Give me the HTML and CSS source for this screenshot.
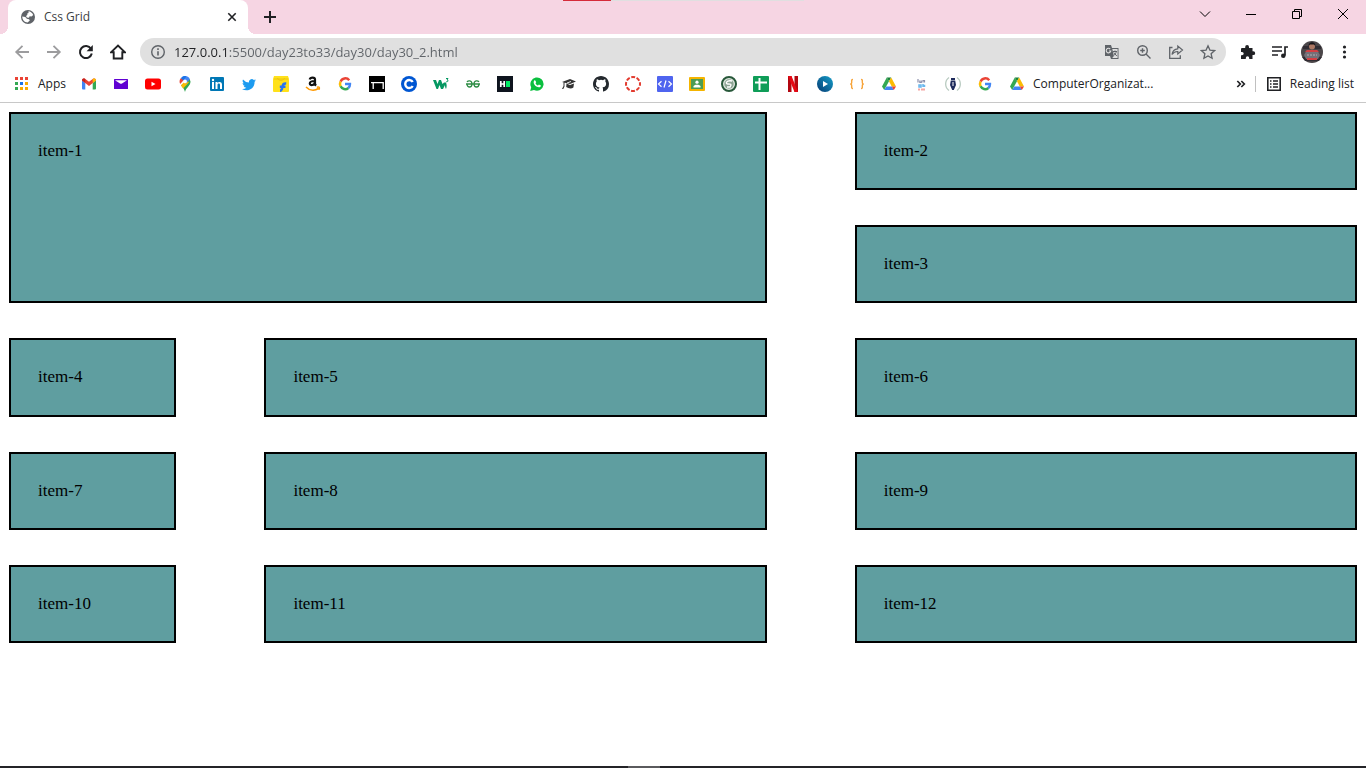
FILE: index.html
```
<!DOCTYPE html>
<html lang="en">
<head>
<meta charset="utf-8">
<meta name="viewport" content="width=device-width, initial-scale=1">
<title>Css Grid</title>
<link rel="stylesheet" href="styles.css">
</head>
<body>
<svg class="defs" aria-hidden="true">
  <symbol id="google" viewBox="0 0 16 16">
    <path fill="none" stroke="#ea4335" stroke-width="2.5" d="M12.200 4.200A5 5 0 0 0 3.600 5.700"/>
    <path fill="none" stroke="#fbbc05" stroke-width="2.5" d="M3.600 5.600a5 5 0 0 0 0 4.800"/>
    <path fill="none" stroke="#34a853" stroke-width="2.5" d="M3.600 10.300a5 5 0 0 0 7.800 1.700"/>
    <path fill="none" stroke="#4285f4" stroke-width="2.4" d="M8 8h5a5 5 0 0 1-1.700 4"/>
  </symbol>
  <symbol id="drive" viewBox="0 0 16 16">
    <path fill="#34a853" d="M5.800 1.500 8 5.200 3.200 14 1 10.400z"/>
    <path fill="#188038" d="M5.800 1.500h4.400L8 5.200z"/>
    <path fill="#fbbc04" d="M10.200 1.500 15 10.400h-4.300L8 5.200z"/>
    <path fill="#4285f4" d="M5.300 10.400h5.400l2.100 3.600H3.200z"/>
    <path fill="#ea4335" d="M10.700 10.400H15L12.800 14z"/>
  </symbol>
</svg>

<div class="load-track"><div class="load-value"></div></div>

<header class="browser">
  <div class="tab-strip">
    <div class="tab">
      <svg class="icon16" viewBox="0 0 16 16"><circle cx="8" cy="8" r="7" fill="#5f6368"/><path fill="#fff" d="M8.500 2.300c2 .2 4 1.600 4.700 3.700L11.500 7.500 9.600 7.200 9 8.700 6.800 8.500 6 7 7.500 5.800 7 4.700l1.500-.8zM2.300 7.500l3 .4 1.600 1.800 2.200.5.700 1.400-2.200 1.900C4.600 13.300 2.100 10.800 2.300 7.500z"/></svg>
      <span class="tab-title">Css Grid</span>
      <button class="tab-close" aria-label="Close tab"><svg class="icon16" viewBox="0 0 16 16"><path class="line dark" stroke-width="1.6" d="m4.300 4.300 7.400 7.400m0-7.400-7.400 7.400"/></svg></button>
    </div>
    <button class="new-tab" aria-label="New tab"><svg class="icon16" viewBox="0 0 16 16"><path class="line dark" stroke-width="2" d="M8 2v12M2 8h12"/></svg></button>
    <div class="window-controls">
      <button aria-label="Search tabs"><svg class="icon16" viewBox="0 0 16 16"><path class="line black" d="m3 5.500 5 5 5-5"/></svg></button>
      <button aria-label="Minimize"><svg class="icon16" viewBox="0 0 16 16"><path class="line black" d="M3 8.500h10"/></svg></button>
      <button aria-label="Restore"><svg class="icon16" viewBox="0 0 16 16"><path class="line black" d="M3.500 5.500h7v7h-7zM5.500 5.500v-2h7v7h-2"/></svg></button>
      <button aria-label="Close"><svg class="icon16" viewBox="0 0 16 16"><path class="line black" d="m3 3 10 10m0-10L3 13"/></svg></button>
    </div>
  </div>

  <div class="toolbar">
    <button class="tool" aria-label="Back"><svg class="icon16" viewBox="0 0 16 16"><path class="line pale" stroke-width="1.8" d="M15 8H2.500m6-6.200L2.200 8l6.300 6.200"/></svg></button>
    <button class="tool" aria-label="Forward"><svg class="icon16" viewBox="0 0 16 16"><path class="line pale" stroke-width="1.8" d="M1 8h12.500m-6-6.200L13.800 8l-6.300 6.200"/></svg></button>
    <button class="tool" aria-label="Reload"><svg class="icon16" viewBox="0 0 16 16"><path class="line dark" stroke-width="2" d="M13 4.800A6 6 0 1 0 13.800 9.500"/><path fill="#202124" d="M14.800 1v6.200H8.600z"/></svg></button>
    <button class="tool" aria-label="Home"><svg class="icon16" viewBox="0 0 16 16"><path class="line dark" stroke-width="1.9" d="M1 8.300h2.700v6.200h8.600V8.300H15L8 1.500z"/></svg></button>
    <div class="omnibox">
      <svg class="icon16 info" viewBox="0 0 16 16"><circle class="line gray" cx="8" cy="8" r="6.300" stroke-width="1.4"/><path class="line gray" stroke-width="1.6" d="M8 7.200v4.200M8 4.300v1.600"/></svg>
      <input class="url" type="text" aria-label="Address" value="127.0.0.1:5500/day23to33/day30/day30_2.html">
      <button class="tool" aria-label="Translate"><svg class="icon16" viewBox="0 0 16 16"><path fill="#5f6368" d="M1 1h6l1 3h6.500v11H7l-1-3H1z"/><path fill="#e0e0e0" d="M8.300 5h5.300v9H8.200l1.700-2z"/><path class="line gray" d="M9 7.500h4M11 6.500v1M12.300 7.500c-.3 1.900-1.300 3-2.300 3.700M9.800 8.500l3 3.500"/><path fill="none" stroke="#e0e0e0" stroke-width="1.1" d="M6.200 5A2.300 2.300 0 1 0 6.800 7H5"/></svg></button>
      <button class="tool" aria-label="Zoom"><svg class="icon16" viewBox="0 0 16 16"><circle class="line gray" cx="6.500" cy="6.500" r="4.800" stroke-width="1.4"/><path class="line gray" stroke-width="1.4" d="M6.500 4.200v4.600M4.200 6.500h4.600M10 10l4.500 4.500"/></svg></button>
      <button class="tool" aria-label="Share"><svg class="icon16" viewBox="0 0 16 16"><path class="line gray" stroke-width="1.3" d="M4.500 3.500H1.700v10.800h10.600v-3"/><path class="line gray" stroke-width="1.2" d="M4 10.500C4.500 6.500 7 5 9.800 4.800V2L14.500 6l-4.700 4V7.500C7.500 7.400 5.600 8.300 4 10.500z"/></svg></button>
      <button class="tool" aria-label="Bookmark this page"><svg class="icon16" viewBox="0 0 16 16"><path class="line gray" stroke-width="1.3" d="m8 1.800 1.900 4.300 4.700.5-3.500 3.100 1 4.600L8 11.900l-4.100 2.400 1-4.600L1.400 6.600l4.700-.5z"/></svg></button>
    </div>
    <button class="tool" aria-label="Extensions"><svg class="icon16" viewBox="0 0 16 16"><path fill="#202124" d="M2 4h3.200V3a1.900 1.900 0 0 1 3.800 0v1h3.500v3.300h.8a1.900 1.900 0 0 1 0 3.800h-.8V15H9.200v-1a1.700 1.700 0 0 0-3.400 0v1H1v-3.700h1a1.700 1.700 0 0 0 0-3.400H1V5a1 1 0 0 1 1-1z"/></svg></button>
    <button class="tool" aria-label="Media controls"><svg class="icon16" viewBox="0 0 16 16"><path class="line dark" stroke-width="1.7" d="M0 3h10M0 7h10M0 11h6M16 3h-3v8.500"/><circle cx="11.300" cy="11.700" r="2.300" fill="#202124"/></svg></button>
    <button class="tool" aria-label="Profile"><svg class="avatar" viewBox="0 0 22 22"><circle cx="11" cy="11" r="11" fill="#4b4649"/><path fill="#302c33" d="M2 5h18v3H2zM1 16h20l-3 4H4z"/><path fill="#747078" d="M6 9h10l3 5-2 4H5l-2-4z"/><path fill="#d33f43" d="M6 9h10l2 2H4zM6 17h10v2H6z"/><circle cx="11" cy="5.500" r="3" fill="#ad7864"/><path fill="#171519" d="M7.500 5c0-5 7-5 7 0L13 3.500H9z"/><path stroke="#b3afb4" stroke-dasharray="2 1" d="M6 14h10"/></svg></button>
    <button class="tool" aria-label="Menu"><svg class="icon16" viewBox="0 0 16 16"><g fill="#202124"><circle cx="8.500" cy="3" r="1.600"/><circle cx="8.500" cy="8" r="1.600"/><circle cx="8.500" cy="13" r="1.600"/></g></svg></button>
  </div>

  <nav class="bookmarks" aria-label="Bookmarks">
    <a class="apps" href="#"><svg class="icon16" viewBox="0 0 16 16"><path fill="#ea4335" d="M2 1h3v3H2zM7 1h3v3H7zM12 1h3v3h-3z"/><path fill="#34a853" d="M2 6h3v3H2zM2 11h3v3H2z"/><path fill="#1a73e8" d="M7 6h3v3H7z"/><path fill="#f9ab00" d="M12 6h3v3h-3zM7 11h3v3H7zM12 11h3v3h-3z"/></svg><span>Apps</span></a>
    <div class="links">
      <a href="#" aria-label="Gmail"><svg class="icon16" viewBox="0 0 16 16"><path fill="#4285f4" d="M1 4.500 4.300 7v6.500H2a1 1 0 0 1-1-1z"/><path fill="#34a853" d="M15 4.500 11.700 7v6.500H14a1 1 0 0 0 1-1z"/><path fill="#ea4335" d="M1 4.500C1 2.500 3 2 4.300 3L8 5.800 11.700 3C13 2 15 2.500 15 4.500L8 10z"/><path fill="#c5221f" d="M1 4.500C1 2.500 3 2 4.300 3v4z"/><path fill="#fbbc04" d="M15 4.500C15 2.500 13 2 11.700 3v4z"/></svg></a>
      <a href="#" aria-label="Yahoo Mail"><svg class="icon16" viewBox="0 0 16 16"><rect x="1" y="3" width="14" height="10" rx=".5" fill="#6001d2"/><path fill="#fff" d="M2 4.200h12L9 7.500a2 2 0 0 1-2 0z"/></svg></a>
      <a href="#" aria-label="YouTube"><svg class="icon16" viewBox="0 0 16 16"><rect y="2.500" width="16" height="11" rx="2.500" fill="#f00"/><path fill="#fff" d="m6.500 5.700 4 2.300-4 2.300z"/></svg></a>
      <a href="#" aria-label="Maps"><svg class="icon16" viewBox="0 0 16 16"><path fill="#34a853" d="M13.500 5.500C13.500 10 9 11.500 8 16 7.400 13 5.500 11.500 4 9.300l8.500-6.500z"/><path fill="#fbbc04" d="m4 9.500 5.800-6.700 2 3.700-5.700 6z"/><path fill="#ea4335" d="M3.700 2.200A5.500 5.500 0 0 0 3.200 8l4-4.400z"/><path fill="#4285f4" d="M6 .4c3-.9 5.700.4 6.900 2.800L9 7.500 6.300 4.800z"/><path fill="#1a73e8" d="M3.700 2.200A5.500 5.500 0 0 1 8 0l1.500.2-3 4z"/><circle cx="8" cy="5.400" r="1.900" fill="#fff"/></svg></a>
      <a href="#" aria-label="LinkedIn"><svg class="icon16" viewBox="0 0 16 16"><rect x="1" y="1" width="14" height="14" rx="1" fill="#0077b5"/><path fill="#fff" d="M3 6h2v7H3zM6.500 6h2v1C9.500 5.300 13 5.400 13 8.500V13h-2V9c0-2-2.500-1.800-2.500 0v4h-2z"/><circle cx="4" cy="4" r="1.200" fill="#fff"/></svg></a>
      <a href="#" aria-label="Twitter"><svg class="icon16" viewBox="0 0 16 16"><path fill="#1d9bf0" d="M15 4.200c-.5.300-1 .4-1.600.5.600-.4 1-.9 1.200-1.500-.6.300-1.200.5-1.800.7a2.900 2.900 0 0 0-4.900 2.600A8 8 0 0 1 2 3.500c-.8 1.400-.3 3 .9 3.800-.500 0-.9-.1-1.300-.3 0 1.400 1 2.500 2.300 2.800-.4.100-.9.100-1.300 0 .4 1.200 1.500 2 2.700 2A5.700 5.700 0 0 1 1 13c4.800 3 12.700.6 12.600-7.300.6-.4 1-1 1.400-1.500z"/></svg></a>
      <a href="#" aria-label="Flipkart"><svg class="icon16" viewBox="0 0 16 16"><path fill="#ffe11b" d="M1 0h14l1 3v12a1 1 0 0 1-1 1H1a1 1 0 0 1-1-1V3z"/><path fill="none" stroke="#edc40b" d="M4.500 2c.5 3 6.500 3 7 0M1 3h14"/><path fill="none" stroke="#2874f0" stroke-width="2.4" d="M7 14.800c2.500 0 2-2.800 2.700-5 .3-1.500 1-2.600 3.500-2.300M6.800 10.800h5.700"/></svg></a>
      <a href="#" aria-label="Amazon"><svg class="icon16" viewBox="0 0 16 16"><path fill="none" stroke="#111" stroke-width="2.2" d="M4.700 3.500C5.300 1 10 1 10 3.500v4c0 1 .4 1.500 1.200 2M9.800 5C6 5 4.800 5.800 4.800 7.500c0 2.500 4.700 1.800 5-.8"/><path fill="none" stroke="#f90" stroke-width="1.5" d="M1 11c3.500 3.700 8.500 4 12.500 1.500M11.800 11.300c2.500-.6 3.200-.1 2.200 2.400"/></svg></a>
      <a href="#" aria-label="Google"><svg class="icon16"><use href="#google"/></svg></a>
      <a href="#" aria-label="Notes"><svg class="icon16" viewBox="0 0 16 16"><path d="M0 0h16v16H0z"/><path fill="none" stroke="#fff" stroke-width="1.3" d="M2 6.700h12.200V13M4.200 7v6"/></svg></a>
      <a href="#" aria-label="Coursera"><svg class="icon16" viewBox="0 0 16 16"><circle cx="8" cy="8" r="8" fill="#0056d2"/><path fill="none" stroke="#fff" stroke-width="2.4" d="M11.700 6a4 4 0 1 0 0 4"/></svg></a>
      <a href="#" aria-label="W3Schools"><svg class="icon16" viewBox="0 0 16 16"><path fill="#059862" d="M0 4h3l1.500 4L6 4h2l1.500 4L11 6.500h2c.8 2 1 4 0 6.500-.8-1.200-1-2.500-1-4L10 13H8L6.500 9 5 13H3.500z"/><path fill="none" stroke="#059862" d="M13 2.500h2L14 4c1.500 0 1.500 2-.8 1.800"/></svg></a>
      <a href="#" aria-label="GeeksforGeeks"><svg class="icon16" viewBox="0 0 16 16"><path fill="none" stroke="#2f8d46" stroke-width="1.3" d="M1 8h14M2 6c1-1.500 5-2 5 2 0 4-5 4-5 0M14 6c-1-1.500-5-2-5 2 0 4 5 4 5 0"/></svg></a>
      <a href="#" aria-label="HackerRank"><svg class="icon16" viewBox="0 0 16 16"><path fill="#0e141e" d="M0 0h16v16H0z"/><path fill="none" stroke="#fff" stroke-width="1.7" d="M3.800 5v6M7.200 5v6M3.800 8h3.400"/><path fill="#00ea64" d="M9 5h4v6H9z"/></svg></a>
      <a href="#" aria-label="WhatsApp"><svg class="icon16" viewBox="0 0 16 16"><path fill="#0abf3f" d="m1.200 15 1-3.700A6.600 6.600 0 1 1 5 14z"/><path fill="#fff" d="M5.200 4.500c.8-.8 1.300-.2 2 1.700l-.7 1c.6 1.200 1.400 1.800 2.500 2.300l.9-1 2 1c.1 2-2.400 2.300-4.500 1C5.200 9 3.900 6.500 5.200 4.500z"/></svg></a>
      <a href="#" aria-label="Courses"><svg class="icon16" viewBox="0 0 16 16"><path fill="#333" d="m1 6 8-3 6 2.500L9 8zM5.500 7.500 9 9l4-1.500-.6 4c-2 1.500-5 1-7.200-.5zM2.500 6h1v4.500L2.300 13H1l1.500-3z"/><path stroke="#e8e8e8" d="m6 7 4-1.500"/></svg></a>
      <a href="#" aria-label="GitHub"><svg class="icon16" viewBox="0 0 16 16"><path fill="#24292e" d="M8 0C3.580 0 0 3.580 0 8c0 3.540 2.290 6.530 5.470 7.590.4.070.55-.17.55-.38 0-.19-.01-.82-.01-1.490-2.010.37-2.530-.49-2.690-.94-.09-.23-.48-.94-.82-1.130-.28-.15-.68-.52-.01-.53.63-.01 1.080.58 1.230.82.72 1.210 1.870.87 2.330.66.07-.52.28-.87.51-1.070-1.780-.2-3.640-.89-3.640-3.950 0-.87.31-1.590.82-2.150-.08-.2-.36-1.020.08-2.120 0 0 .67-.21 2.200.82a7.600 7.600 0 0 1 4 0c1.530-1.040 2.200-.82 2.200-.82.44 1.100.16 1.920.08 2.120.51.56.82 1.270.82 2.150 0 3.070-1.870 3.750-3.650 3.950.29.25.54.73.54 1.480 0 1.070-.01 1.930-.01 2.200 0 .21.15.46.55.38A8 8 0 0 0 16 8c0-4.420-3.580-8-8-8z"/></svg></a>
      <a href="#" aria-label="Canvas"><svg class="icon16" viewBox="0 0 16 16"><circle cx="8" cy="8" r="7" fill="none" stroke="#e23a2e" stroke-width="2" stroke-dasharray="3.9 1.6" stroke-dashoffset="2"/></svg></a>
      <a href="#" aria-label="Code editor"><svg class="icon16" viewBox="0 0 16 16"><rect width="16" height="16" rx="1" fill="#4f64ef"/><path fill="none" stroke="#fff" stroke-width="1.2" d="M4.500 5.200 1.500 8l3 2.800m7-5.600 3 2.800-3 2.800M9 4.500l-2 7"/></svg></a>
      <a href="#" aria-label="Classroom"><svg class="icon16" viewBox="0 0 16 16"><rect y="1" width="16" height="14" rx="1" fill="#f4b400"/><path fill="#4c9c55" d="M2 3h12v10H2z"/><circle cx="8" cy="6.200" r="1.600" fill="#fff"/><path fill="#fff" d="M4.500 10.500c0-2.500 7-2.500 7 0v1h-7z"/></svg></a>
      <a href="#" aria-label="College"><svg class="icon16" viewBox="0 0 16 16"><circle cx="8" cy="8" r="7" fill="#dfe7df" stroke="#28583a" stroke-width="2"/><circle cx="8" cy="8" r="4.700" fill="#8da494"/><path fill="none" stroke="#fff" stroke-width="1.4" d="M11 5C5 4 4 8 7 8s4 0 2 3H6"/></svg></a>
      <a href="#" aria-label="Sheets"><svg class="icon16" viewBox="0 0 16 16"><rect width="16" height="16" rx="1" fill="#0f9d58"/><path stroke="#fff" stroke-width="2" d="M2 6.500h12M6.500 2v12"/></svg></a>
      <a href="#" aria-label="Netflix"><svg class="icon16" viewBox="0 0 16 16"><path fill="#b20710" d="M3 0h3.500v16H3zM9.500 0H13v16H9.500z"/><path fill="#e50914" d="M3 0h3.500L13 16H9.500z"/></svg></a>
      <a href="#" aria-label="Player"><svg class="icon16" viewBox="0 0 16 16"><defs><linearGradient id="blue" x1="1" x2="0" y1="0" y2="1"><stop stop-color="#169fca"/><stop offset="1" stop-color="#063b73"/></linearGradient></defs><circle cx="8" cy="8" r="8" fill="url(#blue)"/><path fill="#fff" d="m6 5 5 3-5 3z"/></svg></a>
      <a href="#" aria-label="Snippets"><svg class="icon16" viewBox="0 0 16 16"><path fill="none" stroke="#f7a43a" stroke-width="1.4" d="M4 3.500c-1.700 0-1.300.8-1.300 2.500S2.500 8 1.200 8c1.300 0 1.500.5 1.500 2s-.4 2.500 1.300 2.500m8-9c1.700 0 1.300.8 1.300 2.500s.2 2 1.500 2c-1.300 0-1.500.5-1.500 2s.4 2.500-1.300 2.500"/></svg></a>
      <a href="#" aria-label="Drive"><svg class="icon16"><use href="#drive"/></svg></a>
      <a href="#" aria-label="Article"><svg class="icon16" viewBox="0 0 16 16"><path fill="none" stroke="#8d90ac" stroke-width="1.2" d="M5 3v3.500M6.800 4.500v2h1.500v-2M10 6.500v-2h1.500v2"/><path fill="none" stroke="#69b7ed" stroke-width="1.5" d="M6 9h2v2H6zM10 8v3m0-1.500h1.500V11"/><path stroke="#f4a6a3" stroke-width="2" d="M5 13.500h2m1 0h4"/></svg></a>
      <a href="#" aria-label="Writing"><svg class="icon16" viewBox="0 0 16 16"><path fill="none" stroke="#b9cbc1" stroke-width="1.3" d="M4 1.500a8 8 0 0 0 0 13M12 1.500a8 8 0 0 1 0 13"/><path fill="#1e2b5c" d="M6 2h4v2H6zM5.800 4.500h4.400L11 9l-2.200 5H7.200L5 9z"/><path stroke="#fff" d="M8 6v4"/></svg></a>
      <a href="#" aria-label="Google Search"><svg class="icon16"><use href="#google"/></svg></a>
      <a class="named" href="#"><svg class="icon16"><use href="#drive"/></svg><span>ComputerOrganizat...</span></a>
    </div>
    <button class="more" aria-label="More bookmarks"><svg class="icon16" viewBox="0 0 16 16"><path class="line dark" stroke-width="1.7" d="m4.300 5 3 3-3 3m4-6 3 3-3 3"/></svg></button>
    <a class="reading" href="#"><svg class="icon16" viewBox="0 0 16 16"><path class="line dark" stroke-width="1.6" d="M1.800 1.800h12.400v12.400H1.800z"/><path class="line dark" stroke-width="1.3" d="M4 5h1.500M4 8h1.500M4 11h1.500M7 5h5M7 8h5M7 11h5"/></svg><span>Reading list</span></a>
  </nav>
</header>

<main class="grid">
  <div class="item item-large">item-1</div>
  <div class="item">item-2</div>
  <div class="item">item-3</div>
  <div class="item">item-4</div>
  <div class="item">item-5</div>
  <div class="item">item-6</div>
  <div class="item">item-7</div>
  <div class="item">item-8</div>
  <div class="item">item-9</div>
  <div class="item">item-10</div>
  <div class="item">item-11</div>
  <div class="item">item-12</div>
</main>

<footer class="taskbar"><div class="task-active"></div></footer>
</body>
</html>
```

FILE: styles.css
```
* { box-sizing: border-box; }

body {
  margin: 0;
  min-height: 100vh;
  display: flex;
  flex-direction: column;
  background: #fff;
}

button {
  display: flex;
  align-items: center;
  justify-content: center;
  padding: 0;
  border: 0;
  background: none;
}

a { color: inherit; text-decoration: none; }

.defs { position: absolute; width: 0; height: 0; }

.icon16 { display: block; flex: none; width: 16px; height: 16px; }
.line { fill: none; }
.dark { stroke: #202124; }
.black { stroke: #000; }
.gray { stroke: #5f6368; }
.pale { stroke: #9c9c9e; }

.load-track {
  position: absolute;
  top: 0;
  left: 563px;
  width: 241px;
  height: 1px;
  background: #e0dfe0;
}
.load-value { width: 20%; height: 1px; background: #d52b3a; }

.browser {
  border-bottom: 1px solid #c8c8c8;
  color: #202124;
  font: 12px/16px "Open Sans", "Noto Sans", sans-serif;
}

.tab-strip {
  display: flex;
  height: 34px;
  padding-left: 8px;
  background: #f6d5e3;
}
.tab {
  position: relative;
  display: flex;
  align-items: center;
  gap: 8px;
  width: 240px;
  padding: 0 8px 0 12px;
  border-radius: 8px 8px 0 0;
  background: #fff;
  color: #3c4043;
}
.tab::before,
.tab::after {
  content: "";
  position: absolute;
  bottom: 0;
  width: 8px;
  height: 8px;
}
.tab::before {
  right: 100%;
  background: radial-gradient(circle at 0 0, transparent 8px, #fff 8px);
}
.tab::after {
  left: 100%;
  background: radial-gradient(circle at 100% 0, transparent 8px, #fff 8px);
}
.tab-title { flex: 1; }
.new-tab { width: 44px; }
.window-controls { display: flex; height: 28px; margin-left: auto; }
.window-controls button { width: 46px; }

.toolbar { display: flex; align-items: center; height: 36px; padding: 0 6px; }
.tool { flex: none; width: 32px; height: 28px; }
.avatar { width: 22px; height: 22px; }
.omnibox {
  display: flex;
  align-items: center;
  flex: 1;
  min-width: 0;
  height: 28px;
  margin: 0 6px;
  padding: 0 2px 0 10px;
  border-radius: 14px;
  background: #e0e0e0;
}
.url {
  flex: 1;
  min-width: 0;
  height: 20px;
  padding: 0 0 0 8px;
  border: 0;
  outline: 0;
  background: linear-gradient(to right, #202124 63px, #5f6368 63px);
  -webkit-background-clip: text;
  background-clip: text;
  color: transparent;
  font: 13px/20px "Open Sans", "Noto Sans", sans-serif;
}

.bookmarks { display: flex; align-items: center; height: 32px; padding: 0 12px 4px 13px; }
.apps { display: flex; gap: 9px; width: 68px; }
.links { display: flex; flex: 1; gap: 16px; min-width: 0; }
.named { display: flex; gap: 8px; white-space: nowrap; }
.more { width: 29px; height: 16px; border-right: 1px solid #c0c0c0; }
.reading { display: flex; gap: 8px; padding-left: 10px; white-space: nowrap; }

.grid {
  display: grid;
  grid-template-columns: 1fr 3fr 3fr;
  grid-auto-rows: 1fr;
  gap: 35px 88px;
  min-height: 531px;
  margin: 9px;
  font: 17px/20px "Liberation Serif", "Times New Roman", serif;
  color: #000;
}
.item { padding: 27px; border: 2px solid #000; background: cadetblue; }
.item-large { grid-column: span 2; grid-row: span 2; }

.taskbar { height: 2px; margin-top: auto; background: #242428; }
.task-active { width: 32px; height: 2px; margin-left: 46%; background: #5a5a5d; }
```
